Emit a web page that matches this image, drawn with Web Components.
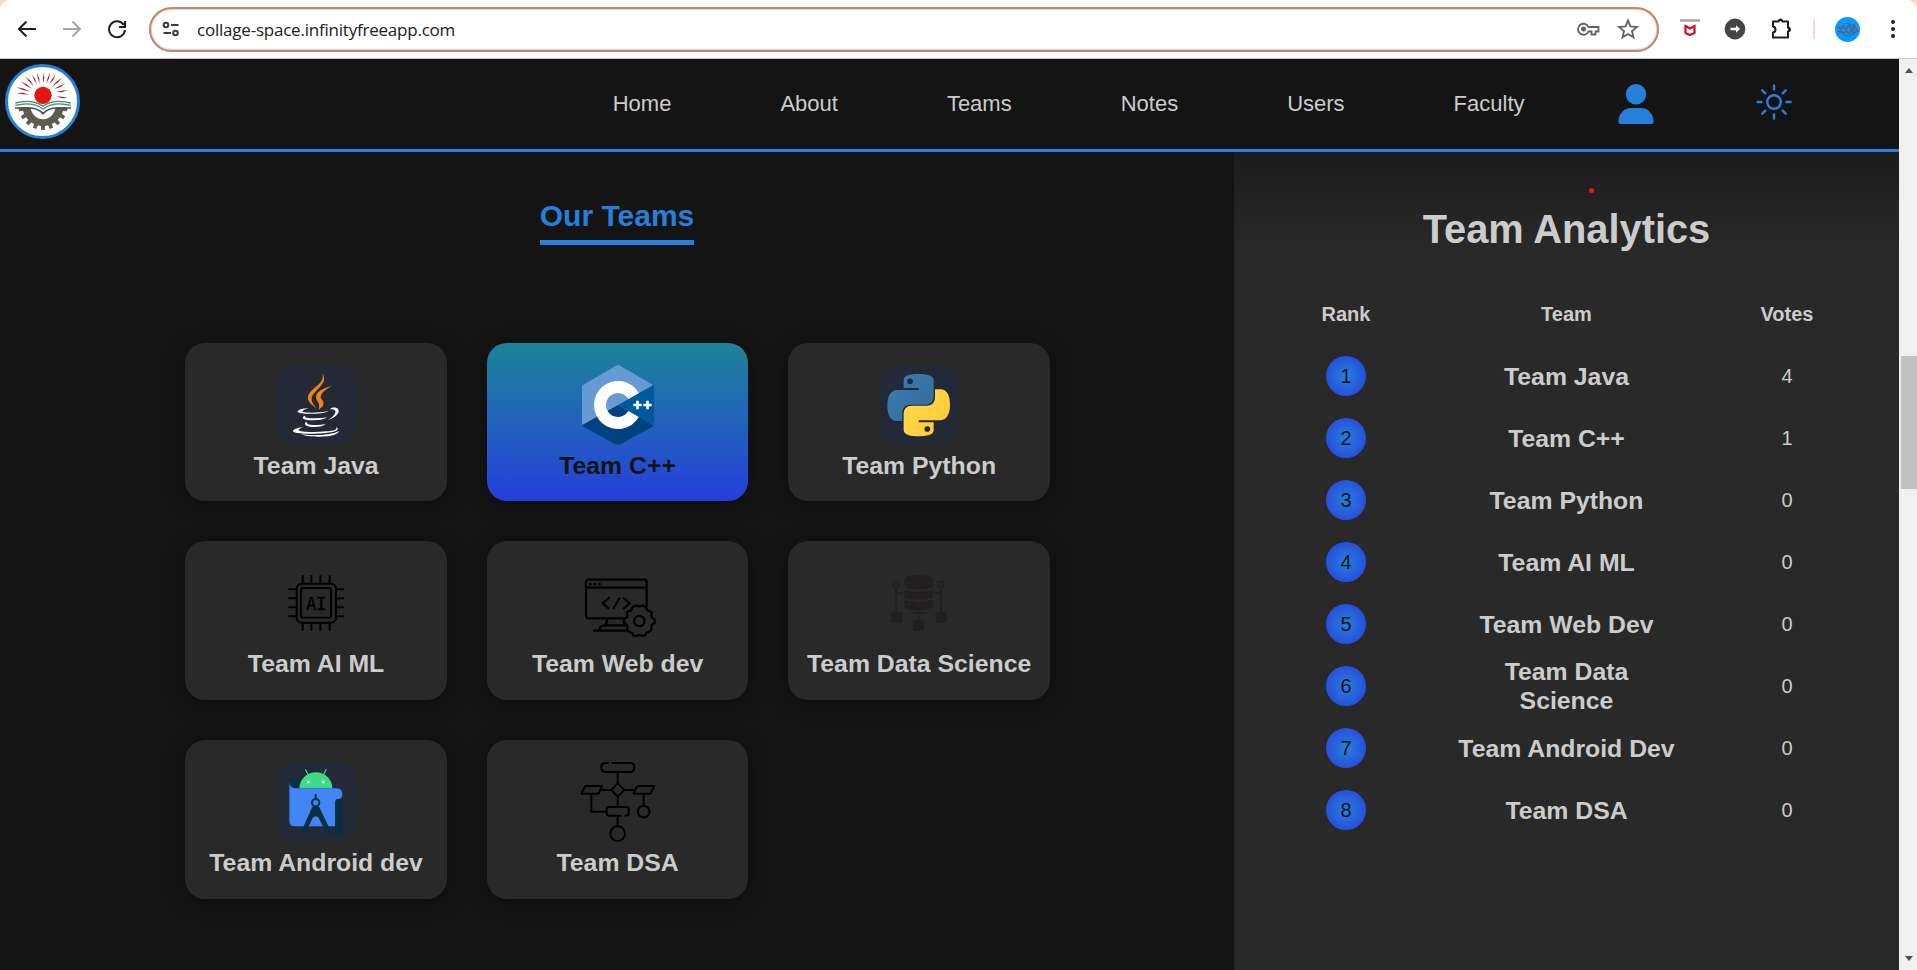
<!DOCTYPE html>
<html lang="en">
<head>
<meta charset="utf-8">
<title>Collage Space</title>
<style>
html,body{margin:0;height:100%;overflow:hidden;background:#141414}
body{font-family:"Liberation Sans",Arial,sans-serif;color:#ccc}
</style>
</head>
<body>
<app-window></app-window>
<script>
const polar=(cx,cy,r,a)=>{const t=a*Math.PI/180;return (cx+r*Math.cos(t)).toFixed(1)+' '+(cy+r*Math.sin(t)).toFixed(1)};
/* Outline of a cog between two angles */
function cog(cx,cy,ro,ri,n,start,end){
  const step=(end-start)/n;let pts=[];
  for(let i=0;i<n;i++){const a=start+i*step;
    pts.push(polar(cx,cy,ri,a),polar(cx,cy,ri,a+step*.22),polar(cx,cy,ro,a+step*.3),polar(cx,cy,ro,a+step*.7),polar(cx,cy,ri,a+step*.78));}
  pts.push(polar(cx,cy,ri,end));
  return 'M'+pts.join('L');
}
const tile='<rect width="240" height="240" rx="58" fill="#242938"/>';
const art={
java:tile+`<g fill="#f58219"><path d="M140 27C143 50 128 58 112 72C98 84 92 96 98 107C104 118 112 123 121 130C113 119 105 110 107 98C109 86 124 76 135 62C146 48 147 38 140 27Z"/><path d="M168 63C142 68 120 82 120 95C120 109 135 113 128 134C146 124 145 112 137 103C128 92 141 77 168 63Z"/></g>
<g fill="#fff"><path d="M98 129C80 130 64 135 65 140C68 149 140 149 158 138C130 144 95 144 80 141C77 139 86 132 98 129Z"/><path d="M166 129C194 121 200 152 156 165C183 149 187 130 162 133Z"/><path d="M85 152C73 160 86 167 112 166C132 166 146 163 153 157C130 160 95 162 89 157Z"/><path d="M91 170C80 178 92 186 116 186C132 186 143 183 149 177C130 181 102 181 95 177Z"/><path d="M80 186C55 190 48 197 52 200C62 208 140 208 165 202C190 197 188 190 180 186C186 193 175 198 150 199C120 202 80 201 70 197C65 194 72 190 80 186Z"/><path d="M75 207C100 213 165 212 189 198C186 210 160 215 130 215C100 215 82 212 75 207Z"/></g>`,
cpp:`<g stroke-linejoin="round" stroke-width="14"><path d="M120 7L221 65V175L120 233L19 175V65Z" fill="#659ad2" stroke="#659ad2"/></g><path d="M120 120L13 180Q15 184 20 187L112 238Q120 242 128 238L220 187Q225 184 227 180Z" fill="#00427e"/><path d="M120 120L227 59Q228 62 228 68V172Q228 177 227 181Z" fill="#00599c"/><path d="M182.4 84A72 72 0 1 0 182.4 156L151.2 138A36 36 0 1 1 151.2 102Z" fill="#fff"/><path d="M166 120h25M178.500 107.500v25M196 120h25M208.500 107.500v25" stroke="#fff" stroke-width="8"/>`,
python:tile+`<defs><linearGradient id="pb" x1="0" y1="0" x2="1" y2="1"><stop offset="0" stop-color="#387eb8"/><stop offset="1" stop-color="#366994"/></linearGradient><linearGradient id="py" x1="1" y1="1" x2="0" y2="0"><stop offset="0" stop-color="#ffe052"/><stop offset="1" stop-color="#ffc331"/></linearGradient><path id="ps" d="M74 69V45C74 31 96 27 118 27C142 27 164 31 164 46V94C164 110 154 119 140 119H94C78 119 70 130 70 144V168H54C34 168 25 150 25 121C25 92 36 75 56 75H119V69Z"/></defs><use href="#ps" fill="url(#pb)"/><circle cx="93" cy="49" r="8.500" fill="#242938"/><g transform="rotate(180 119 120.500)"><use href="#ps" fill="url(#py)"/><circle cx="93" cy="49" r="8.500" fill="#242938"/></g>`,
ai:`<g fill="none" stroke="#000" stroke-width="6" stroke-linecap="round"><rect x="62" y="62" width="118" height="117" rx="15"/><rect x="75" y="75" width="90" height="89" rx="7" stroke-width="5.500"/><path d="M80 39v20M106 39v20M133 39v20M161 39v20M80 182v19M106 182v19M133 182v19M161 182v19M39 79h20M39 106h20M39 133h20M39 160h20M183 79h19M183 106h19M183 133h19M183 160h19"/></g><text x="91" y="140" font-family="DejaVu Sans Mono" font-size="55" textLength="60" lengthAdjust="spacingAndGlyphs" stroke="#000">AI</text>`,
web:`<g fill="none" stroke="#000" stroke-width="6.500" stroke-linecap="round" stroke-linejoin="round"><rect x="24" y="50" width="182" height="116" rx="7"/><path d="M24 74H206"/><path d="M37 63h.1M50 63h.1M64 63h.1" stroke-width="9"/><path d="M92 105L74 121L92 136M124 106L107 136M137 105L155 121L137 136M88 168L84 185M64 199Q67 187 80 187H150M48 203H152M142 168L145 184"/><path d="M176 127Q184 133 192 127L204 132Q206 143 214 144L222 149Q218 157 221 163L230 169V180L221 186Q218 192 221 199L211 208Q204 206 202 217L192 219Q184 213 176 219L165 217Q163 206 155 208L147 199Q150 192 147 186L138 180V169L147 163Q150 157 146 149L154 144Q162 143 164 132Z" fill="#292929"/><circle cx="184" cy="174" r="15.500"/></g>`,
data:`<g fill="#231f20"><path d="M77 49C77 32 162 32 162 49V71C162 82 77 82 77 71Z"/><path d="M77 80C95 88 144 88 162 80V101C158 112 81 112 77 101Z"/><path d="M77 111C95 119 144 119 162 111V132C158 144 81 144 77 132Z"/><rect x="36" y="147" width="34" height="33" rx="7"/><rect x="170" y="147" width="34" height="33" rx="7"/><rect x="102" y="171" width="33" height="33" rx="7"/></g><g fill="none" stroke="#231f20" stroke-width="6"><circle cx="51" cy="64" r="8.500"/><circle cx="186" cy="64" r="8.500"/><path d="M51 74v74M186 74v74M51 91h22M165 91h21M96 150h47M119 138v12M119 159v12"/></g><g fill="#292929"><circle cx="88" cy="61" r="3"/><circle cx="119" cy="66" r="3"/><circle cx="150" cy="61" r="3"/><circle cx="88" cy="93" r="3"/><circle cx="119" cy="97" r="3"/><circle cx="150" cy="93" r="3"/><circle cx="88" cy="124" r="3"/><circle cx="119" cy="128" r="3"/><circle cx="150" cy="124" r="3"/></g>`,
android:tile+`<path d="M58 45H84V80H48L40 62C40 52 48 45 58 45Z" fill="#073042"/><path d="M70 79A49.500 48 0 0 1 169 79Z" fill="#3ddc84"/><path d="M97 39L88 22M142 39L151 22" stroke="#3ddc84" stroke-width="3.500"/><circle cx="97" cy="60" r="4.500" fill="#fff"/><circle cx="142" cy="60" r="4.500" fill="#fff"/><path d="M176 108H199V205Q199 219 186 219H176Z" fill="#073042"/><path d="M40 60Q42 79 60 79H182Q199 79 199 97Q199 111 186 111Q177 111 177 122V193H56Q40 193 40 177Z" fill="#4285f4"/><path d="M119 96v16" stroke="#073042" stroke-width="6"/><circle cx="119" cy="122" r="11" fill="#4285f4" stroke="#073042" stroke-width="6"/><path d="M109 134H129L166 210Q164 220 154 219L128 167Q119 158 110 167L88 215Q82 222 77 215L78 204Z" fill="#073042"/>`,
dsa:`<g fill="none" stroke="#000" stroke-width="6" stroke-linecap="round" stroke-linejoin="round"><path d="M90 3H82Q70 3 70 16Q70 30 82 30H157Q169 30 169 16Q169 3 157 3H103M119 32V64M119 64L139 84L119 104L100 84ZM22 72H72L62 95H10ZM178 72H229L217 95H166ZM66 84H99M140 84H171M119 104V134M40 96V149H84M129 161H93Q86 161 86 154V142Q86 135 93 135H145Q152 135 152 142V154Q152 161 143 161M119 163V192M197 96V131"/><circle cx="197" cy="149" r="17.500"/><circle cx="119" cy="215" r="22"/></g>`
};
const rays=[[-175,42,81],[-163,40,84],[-148,38,80],[-133,38,78],[-118,37,72],[-105,35,70],[-88,36,68],[-73,36,72],[-59,37,74],[-43,37,80],[-28,38,76],[-12,40,76],[6,40,76]];
const crest=`<svg viewBox="0 0 225 225"><circle cx="112.500" cy="112.500" r="108" fill="#fff" stroke="#2680db" stroke-width="9"/><g fill="#a32632">${rays.map(([a,i,o])=>`<path d="M${polar(114,94,i,a-2)}L${polar(114,94,(i+o)/2,a+2.5)}L${polar(114,94,o,a)}L${polar(114,94,(i+o)/2,a-2)}Z"/>`).join('')}</g><circle cx="114" cy="94" r="26" fill="#e61515"/>
<path d="${cog(114,124,74,62,9,0,180)}L${polar(114,124,38,180)}A38 42 0 0 0 152 124Z" fill="#5e5c4e"/><path d="M30 113Q78 100 114 127Q150 100 198 113V130H157Q132 130 114 147Q98 130 72 130H30Z" fill="#fff"/><path d="M31 117Q82 104 114 127Q146 104 197 117M31 124Q82 111 114 135Q146 111 197 124" fill="none" stroke="#3d8d6e" stroke-width="4"/><path d="M30 132H72Q99 132 114 149Q130 132 157 132H198" fill="none" stroke="#4b4e46" stroke-width="5"/></svg>`;
const g={
back:'<path d="M21 12H4M11.500 4.500L4 12l7.500 7.500" fill="none" stroke="#1f1f1f" stroke-width="2"/>',
fwd:'<path d="M3 12h17M12.500 4.500L20 12l-7.500 7.500" fill="none" stroke="#a5a5a5" stroke-width="2"/>',
reload:'<path d="M18.800 8A8 8 0 1 0 20 13M20 4v6h-6" fill="none" stroke="#1f1f1f" stroke-width="2"/>',
tune:'<g fill="none" stroke="#3c3c3c" stroke-width="2"><circle cx="7" cy="8" r="2.300"/><path d="M12 8H19.500M4.500 16H12"/><circle cx="16.500" cy="16" r="2.300"/></g>',
key:'<g fill="none" stroke="#5f6368" stroke-width="1.800"><path d="M12.500 10A5.500 5.500 0 1 0 12.500 14.500H15.500V17.500H19.500V14.500H22.500V10Z"/></g><circle cx="7.500" cy="12" r="2.500" fill="#5f6368"/>',
star:'<path d="M12 3.500l2.500 5.900 6.400.5-4.900 4.200 1.500 6.200L12 17l-5.500 3.300L8 14.100 3.100 9.900l6.400-.5Z" fill="none" stroke="#5f6368" stroke-width="1.900"/>',
shield:'<path d="M2 3.500H22" stroke="#aaa" stroke-width="2.600"/><path d="M7.500 9L12 11.500l4.500-2.500V16L12 18l-4.500-2Z" fill="none" stroke="#c8102e" stroke-width="2.200"/>',
arrow:'<circle cx="12" cy="12" r="10.400" fill="#444"/><path d="M7.500 12h7" stroke="#fff" stroke-width="2.600"/><path d="M13 8.200L17 12l-4 3.800Z" fill="#fff"/>',
puzzle:'<path d="M4 4.500h5.500Q10 2.500 11.500 2.500T13.500 4.500H19V10.500Q21 11 21 12.500T19 14.500V20.500H4V15.500Q6.500 15 6.500 12.500T4 9.500Z" fill="none" stroke="#1f1f1f" stroke-width="2" stroke-linejoin="round"/><path d="M9.500 4a2.200 2.200 0 0 1 4 0ZM19.500 10.500a2 2 0 0 1 0 4Z"/>'
};
function define(name,css,html){
  customElements.define(name,class extends HTMLElement{
    connectedCallback(){
      if(this.shadowRoot)return;
      const root=this.attachShadow({mode:'open'});
      root.innerHTML='<style>*{box-sizing:border-box}'+css+'</style>'+(typeof html==='function'?html(this):html);
    }
  });
}
define('tool-icon',':host{display:block;width:24px;height:24px;flex:none}svg{display:block;width:100%;height:100%}',e=>`<svg viewBox="0 0 24 24">${g[e.getAttribute('name')]}</svg>`);
define('address-bar',`:host{display:flex;box-sizing:border-box;align-items:center;height:45px;width:1510px;margin-left:20px;border:2px solid #c0876b;border-radius:23px;box-shadow:inset 0 0 0 1px #e9d3c8;flex:none}
.tune{margin-left:8px}.url{margin-left:14px;font:17px/22px "Open Sans","Noto Sans",sans-serif;color:#202020;white-space:nowrap;letter-spacing:-.22px;padding-top:1px}.key{margin-left:auto;margin-right:16px}.star{margin-right:17px}`,
`<tool-icon class="tune" name="tune"></tool-icon><span class="url"><slot></slot></span><tool-icon class="key" name="key"></tool-icon><tool-icon class="star" name="star"></tool-icon>`);
define('browser-bar',`:host{display:block;background:#fbd9c9;height:59px}
.bar{display:flex;align-items:center;height:59px;background:#fff;border-bottom:1px solid #c8c8c8;border-radius:10px 10px 0 0;padding:0 0 0 15px}
.b2{margin-left:21px}.b3{margin-left:21px}.x1{margin-left:19px}.x2{margin-left:21px}.x3{margin-left:22px}
.sep{width:2px;height:20px;background:#fbd9c9;margin-left:20px}
.avatar{display:block;width:25px;height:25px;margin-left:20px}.dots{display:block;width:6px;height:20px;margin-left:30px}`,
`<div class="bar"><tool-icon name="back"></tool-icon><tool-icon class="b2" name="fwd"></tool-icon><tool-icon class="b3" name="reload"></tool-icon>
<address-bar>collage-space.infinityfreeapp.com</address-bar>
<tool-icon class="x1" name="shield"></tool-icon><tool-icon class="x2" name="arrow"></tool-icon><tool-icon class="x3" name="puzzle"></tool-icon><div class="sep"></div>
<svg class="avatar" viewBox="0 0 75 75"><circle cx="37.500" cy="37.500" r="37.500" fill="#0b98ff"/><circle cx="37" cy="38" r="19" fill="none" stroke="#46698c" stroke-width="3"/><path d="M6 33q4-6 8 0t8-2 8 2 8-3 8 3 8-2 6 2M14 46q6-6 8 0t8 0 8 0 8-1 8 1 7-1 9 0" fill="none" stroke="#46698c" stroke-width="5"/><path d="M58 33l10 2v6ZM7 42l9 0-1 6Z" fill="#e01b2d"/></svg>
<svg class="dots" viewBox="0 0 6 20"><g fill="#1f1f1f"><circle cx="3" cy="3" r="2"/><circle cx="3" cy="10" r="2"/><circle cx="3" cy="17" r="2"/></g></svg></div>`);
define('site-nav',`:host{display:flex;box-sizing:border-box;align-items:flex-start;height:93px;background:#141414;border-bottom:3px solid #2680db}
.logo{width:75px;height:75px;margin:5px 0 0 5px;flex:none}svg{display:block;width:100%;height:100%}
nav{display:flex;gap:109px;margin:32px 0 0 532.7px;font-size:22px;line-height:26px;color:#ccc}
.user{width:36px;height:40px;margin:25px 0 0 93.3px;flex:none}.sun{width:36px;height:36px;margin:25px 0 0 102.5px;flex:none}`,
`<div class="logo">${crest}</div><nav><span>Home</span><span>About</span><span>Teams</span><span>Notes</span><span>Users</span><span>Faculty</span></nav>
<div class="user"><svg viewBox="0 0 36 40"><g fill="#2680db"><circle cx="18" cy="10.300" r="10.300"/><path d="M.5 37.500C.5 29 7 24 12.500 24H23C30 24 35.500 30 35.500 37.500Q35.500 40 33.500 40H2.500Q.5 40 .5 37.500Z"/></g></svg></div>
<div class="sun"><svg viewBox="0 0 36 36"><g fill="none" stroke="#2680db" stroke-width="2.400" stroke-linecap="round"><circle cx="18" cy="18" r="6.800"/><path d="M18 1.500v4M18 30.500v4M1.500 18h4M30.500 18h4M6.300 6.300l3 3M26.700 26.700l3 3M29.700 6.300l-3 3M9.300 26.700l-3 3"/></g></svg></div>`);
define('team-card',`:host{display:flex;box-sizing:border-box;flex-direction:column;align-items:center;height:158.7px;padding-top:22px;border-radius:20px;background:#292929;box-shadow:0 3px 18px rgba(0,0,0,.35);color:#ccc}
:host([active]){background:linear-gradient(#1d8496,#2165b8 45%,#263fdc);color:#141414}
svg{width:80px;height:80px;display:block}h3{margin:7px 0 0;font-size:24.8px;line-height:28.5px;font-weight:bold;white-space:nowrap}`,
e=>`<svg viewBox="0 0 240 240">${art[e.getAttribute('icon')]}</svg><h3><slot></slot></h3>`);
define('team-board',`:host{display:flex;flex-direction:column;align-items:center;width:1234px;flex:none;background:#141414}
h2{margin:45px 0 0;padding-bottom:6px;border-bottom:5px solid #2680db;color:#2680db;font-size:30px;line-height:37px}
.grid{display:grid;grid-template-columns:repeat(3,1fr);gap:40px;width:864.6px;margin:97.6px 0 0 1.2px}`,
`<h2>Our Teams</h2><div class="grid"><team-card icon="java">Team Java</team-card><team-card icon="cpp" active>Team C++</team-card><team-card icon="python">Team Python</team-card><team-card icon="ai">Team AI ML</team-card><team-card icon="web">Team Web dev</team-card><team-card icon="data">Team Data Science</team-card><team-card icon="android">Team Android dev</team-card><team-card icon="dsa">Team DSA</team-card></div>`);
define('rank-row',`:host{display:grid;grid-template-columns:40px 220px 40px;column-gap:90.5px;align-items:center;justify-items:center;height:62px;text-align:center;font-size:20px}
i{font-style:normal;width:40px;height:40px;line-height:40px;border-radius:50%;background:radial-gradient(circle closest-side,#2680db,#2750dc);color:#141414}
b{font-size:24.8px;line-height:29px}`,
e=>`<i>${e.getAttribute('rank')}</i><b><slot></slot></b><span>${e.getAttribute('votes')}</span>`);
define('team-analytics',`:host{display:flex;flex-direction:column;align-items:center;flex:1;background:linear-gradient(#1c1c1c,#292929 100px);position:relative;color:#ccc}
h1{margin:54px 0 0;font-size:39.8px;line-height:46px}
.head{display:grid;grid-template-columns:40px 220px 40px;column-gap:90.5px;justify-items:center;font-weight:bold;font-size:20px;line-height:24px;margin:50px 0 19px}
.dot{position:absolute;left:354.5px;top:36px;width:5px;height:5px;border-radius:50%;background:#f01818}`,
`<div class="dot"></div><h1>Team Analytics</h1><div class="head"><span>Rank</span><span>Team</span><span>Votes</span></div>
${[['Team Java',4],['Team C++',1],['Team Python',0],['Team AI ML',0],['Team Web Dev',0],['Team Data<br>Science',0],['Team Android Dev',0],['Team DSA',0]].map(([t,v],i)=>`<rank-row rank="${i+1}" votes="${v}">${t}</rank-row>`).join('')}`);
define('scroll-track',`:host{display:flex;flex-direction:column;align-items:flex-end;width:18px;background:#f0f0f0;flex:none}
.up,.down{width:0;height:0;border:4px solid transparent;margin-right:4px}.up{border-bottom:5px solid #505050;border-top:0;margin-top:9px}
.thumb{width:16px;height:133px;background:#c1c1c1;margin-top:283px}.down{border-top:5px solid #505050;border-bottom:0;margin-top:auto;margin-bottom:9px}`,
`<div class="up"></div><div class="thumb"></div><div class="down"></div>`);
define('app-window',`:host{display:flex;flex-direction:column;width:1917px;height:970px;overflow:hidden}
.view{display:flex;flex:1;min-height:0}.site{display:flex;flex-direction:column;width:1899px;flex:none}.main{display:flex;flex:1;min-height:0}`,
`<browser-bar></browser-bar><div class="view"><div class="site"><site-nav></site-nav><div class="main"><team-board></team-board><team-analytics></team-analytics></div></div><scroll-track></scroll-track></div>`);
</script>
</body>
</html>
